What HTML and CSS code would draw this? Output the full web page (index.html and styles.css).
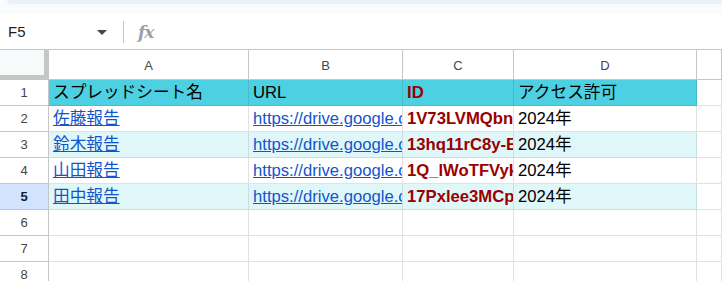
FILE: index.html
```html
<!DOCTYPE html>
<html lang="ja">
<head>
    <meta charset="UTF-8">
    <meta name="viewport" content="width=device-width, initial-scale=1.0">
    <title>スプレッドシート一覧</title>
    <link rel="stylesheet" href="styles.css">
</head>
<body>
    <div class="top-strip"><div class="top-strip-inner"></div></div>

    <div class="formula-bar">
        <div class="name-box">F5</div>
        <span class="caret"></span>
        <span class="divider"></span>
        <span class="fx">fx</span>
    </div>

    <div class="sheet">
        <div class="corner"></div>
        <div class="col-head">A</div>
        <div class="col-head">B</div>
        <div class="col-head">C</div>
        <div class="col-head">D</div>
        <div class="col-head"></div>

        <div class="row-head">1</div>
        <div class="cell header">スプレッドシート名</div>
        <div class="cell header">URL</div>
        <div class="cell header id">ID</div>
        <div class="cell header">アクセス許可</div>
        <div class="cell"></div>

        <div class="row-head">2</div>
        <div class="cell"><a href="#">佐藤報告</a></div>
        <div class="cell"><a href="#">https://drive.google.com/drive/folders/1V73LVMQbn</a></div>
        <div class="cell id">1V73LVMQbnXk2aR0pQ</div>
        <div class="cell">2024年</div>
        <div class="cell"></div>

        <div class="row-head">3</div>
        <div class="cell band"><a href="#">鈴木報告</a></div>
        <div class="cell band"><a href="#">https://drive.google.com/drive/folders/13hq11rC8y-E</a></div>
        <div class="cell band id">13hq11rC8y-EbT9mLw</div>
        <div class="cell band">2024年</div>
        <div class="cell"></div>

        <div class="row-head">4</div>
        <div class="cell"><a href="#">山田報告</a></div>
        <div class="cell"><a href="#">https://drive.google.com/drive/folders/1Q_lWoTFVyk</a></div>
        <div class="cell id">1Q_lWoTFVykH3sNd8</div>
        <div class="cell">2024年</div>
        <div class="cell"></div>

        <div class="row-head active">5</div>
        <div class="cell band"><a href="#">田中報告</a></div>
        <div class="cell band"><a href="#">https://drive.google.com/drive/folders/17Pxlee3MCp</a></div>
        <div class="cell band id">17Pxlee3MCpQz4vYt</div>
        <div class="cell band">2024年</div>
        <div class="cell"></div>

        <div class="row-head">6</div>
        <div class="cell"></div><div class="cell"></div><div class="cell"></div><div class="cell"></div><div class="cell"></div>

        <div class="row-head">7</div>
        <div class="cell"></div><div class="cell"></div><div class="cell"></div><div class="cell"></div><div class="cell"></div>

        <div class="row-head">8</div>
        <div class="cell"></div><div class="cell"></div><div class="cell"></div><div class="cell"></div><div class="cell"></div>
    </div>
</body>
</html>
```

FILE: styles.css
```css
body {
    margin: 0;
    padding: 0;
    background-color: #fff;
    font-family: 'Liberation Sans', Arial, 'Noto Sans CJK JP', sans-serif;
    color: #000;
    overflow: hidden;
}

/* strip left from the toolbar above */
.top-strip {
    height: 14px;
    background-color: #f9fbfd;
}
.top-strip-inner {
    height: 4px;
    margin-left: 7px;
    background-color: #e9f1fb;
    border-bottom-left-radius: 6px;
}

.formula-bar {
    height: 35px;
    display: flex;
    align-items: center;
    border-bottom: 1px solid #c4c7c5;
}
.name-box {
    width: 89px;
    padding-left: 8px;
    font-size: 15px;
    color: #1f1f1f;
}
.caret {
    width: 0;
    height: 0;
    border-left: 5px solid transparent;
    border-right: 5px solid transparent;
    border-top: 5px solid #444746;
    margin-top: 1px;
}
.divider {
    width: 1px;
    height: 22px;
    margin-left: 16px;
    background-color: #c4c7c5;
}
.fx {
    margin-left: 14px;
    font-family: 'DejaVu Serif', serif;
    font-style: italic;
    font-weight: bold;
    font-size: 17px;
    color: #9aa0a6;
    letter-spacing: -1px;
}

.sheet {
    display: grid;
    grid-template-columns: 49px 200px 154px 111px 183px 1fr;
    grid-template-rows: 30px repeat(8, 26px);
}
.sheet > div {
    box-sizing: border-box;
    overflow: hidden;
    white-space: nowrap;
}

.corner {
    background-color: #f8f9fa;
    border-right: 5px solid #c4c7c5;
    border-bottom: 5px solid #c4c7c5;
}
.col-head {
    display: flex;
    align-items: center;
    justify-content: center;
    font-size: 13px;
    color: #444746;
    border-right: 1px solid #c4c7c5;
    border-bottom: 1px solid #c4c7c5;
    padding-top: 1px;
}
.row-head {
    display: flex;
    align-items: center;
    justify-content: center;
    font-size: 13px;
    color: #444746;
    border-right: 1px solid #c4c7c5;
    border-bottom: 1px solid #c4c7c5;
}
.row-head.active {
    background-color: #d3e3fd;
    color: #0b1f3a;
    font-weight: bold;
}

.cell {
    display: flex;
    align-items: flex-end;
    padding: 0 0 2px 4px;
    font-size: 16.67px;
    line-height: 21px;
    border-right: 1px solid #e1e1e1;
    border-bottom: 1px solid #e1e1e1;
}
.cell.header {
    background-color: #4dd0e1;
    border-color: #45bccb;
}
.cell.band {
    background-color: #e0f7fa;
    border-color: #c9dee1;
}
.cell.id {
    color: #990000;
    font-weight: bold;
}
.cell a {
    color: #1155cc;
    text-decoration: underline;
}
```
